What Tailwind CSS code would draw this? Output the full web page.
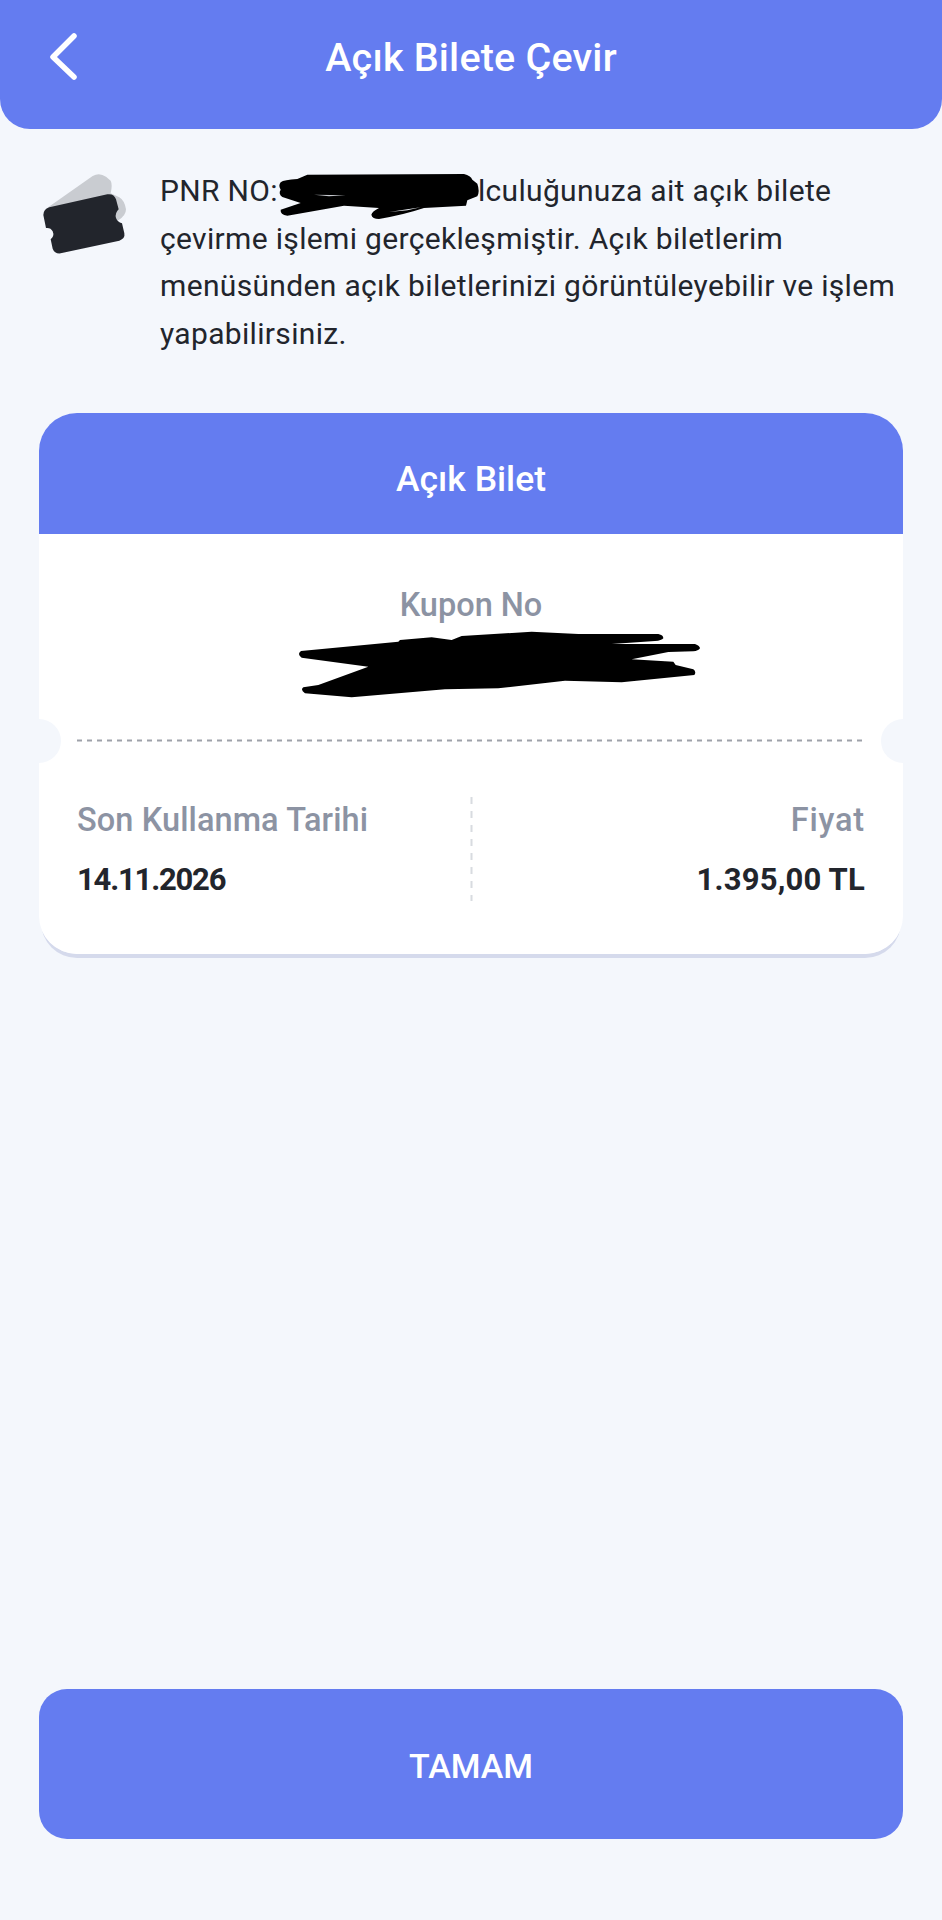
<!DOCTYPE html>
<html lang="tr">
<head>
  <meta charset="UTF-8" />
  <meta name="viewport" content="width=device-width, initial-scale=1.0"/>
  <title>Açık Bilete Çevir</title>
  <script src="https://cdn.jsdelivr.net/npm/@tailwindcss/browser@4"></script>
</head>
<body class="bg-[#f4f7fc] font-['Roboto',sans-serif] text-[#22252c]">
  <div class="flex flex-col h-[1920px] w-[942px] overflow-hidden">

    <!-- top bar -->
    <header class="relative h-[129px] shrink-0 bg-[#647cf0] rounded-b-[30px] flex items-start justify-center pt-[33px]">
      <svg class="absolute left-[46px] top-[30px]" width="34" height="52" viewBox="0 0 34 52" fill="none">
        <path d="M28 6 L7 27 L28 47" stroke="white" stroke-width="5.5" stroke-linecap="round" stroke-linejoin="round"/>
      </svg>
      <h1 class="text-[39.5px] leading-[50px] font-medium text-white tracking-[0.2px]">Açık Bilete Çevir</h1>
    </header>

    <!-- info text -->
    <div class="flex items-start pl-[20px] mt-[21px]">
      <svg class="shrink-0 mr-[10px]" width="130" height="120" viewBox="0 0 390 360">
        <path d="M76 178 L218 78 Q238 66 258 80 L272 92 Q278 104 272 130 L298 142 Q314 152 318 178 Q318 196 296 210 L80 200 Z" fill="#c9ccd1"/>
        <path d="M70 195 Q70 178 88 172 L262 133 Q282 130 288 148 L296 178 Q284 190 288 204 Q292 216 306 220 L313 250 Q316 266 298 272 L122 310 Q104 312 98 296 L92 268 Q104 258 98 244 Q92 232 78 234 Z" fill="#22252c"/>
      </svg>
      <p class="pt-[17px] text-[30px] leading-[47.5px] tracking-[0.33px] whitespace-nowrap">PNR NO:<span class="relative inline-block w-[200px] h-[20px]"><svg class="absolute left-[-14px] top-[-18px]" width="230" height="70" viewBox="0 0 690 210"><path d="M50 58 Q60 50 100 48 L130 35 L600 33 Q620 38 625 50 L640 62 Q648 85 640 100 L610 112 L606 128 L480 135 Q420 155 345 168 Q325 168 322 155 Q325 145 345 135 L240 128 L70 158 Q48 155 50 140 L110 120 L55 102 Q42 92 50 80 Q42 68 50 58 Z" fill="black"/><path d="M375 147 L470 133 L430 142 Z" fill="#f4f7fc"/><path d="M150 95 L245 97 L195 100 Z" fill="#c9ccd1"/></svg></span>lculuğunuza ait açık bilete<br>çevirme işlemi gerçekleşmiştir. Açık biletlerim<br>menüsünden açık biletlerinizi görüntüleyebilir ve işlem<br>yapabilirsiniz.</p>
    </div>

    <!-- ticket card -->
    <div class="relative mx-[39px] mt-[56px] rounded-[38px] shadow-[0_6px_0_-2px_#d5daec]">
      <div class="relative bg-white rounded-[38px] overflow-hidden h-[541px]">
        <div class="h-[121px] bg-[#647cf0] flex items-center justify-center pt-[13px] text-white text-[35.5px] font-medium">Açık Bilet</div>

        <div class="relative h-[208px] flex flex-col items-center pt-[50px]">
          <span class="text-[32.5px] leading-[42px] font-medium text-[#8c93a3]">Kupon No</span>
          <svg class="absolute left-[246px] top-[86px]" width="430" height="90" viewBox="0 0 1290 270">
            <path d="M48 93 L340 65 L345 60 L440 52 L500 60 L530 48 L740 35 L880 42 L1120 42 Q1135 45 1135 55 Q1130 62 1110 63 L980 72 L1230 72 Q1245 78 1245 85 Q1240 93 1225 94 L1150 96 L1040 118 L1165 125 L1172 135 L1225 148 Q1235 155 1228 165 L1010 187 L840 182 L640 205 L480 208 L200 232 L60 220 Q45 210 55 202 L100 195 L250 140 L50 113 Q35 103 48 93 Z" fill="black"/>
          </svg>
          <svg class="absolute left-[38px] bottom-0" width="790" height="3" viewBox="0 0 790 3">
            <line x1="0" y1="1.5" x2="790" y2="1.5" stroke="#9ea1a9" stroke-width="2" stroke-dasharray="5 5"/>
          </svg>
        </div>
        <span class="absolute left-[-22px] top-[306px] w-[44px] h-[44px] rounded-full bg-[#f4f7fc]"></span>
        <span class="absolute right-[-22px] top-[306px] w-[44px] h-[44px] rounded-full bg-[#f4f7fc]"></span>

        <div class="relative flex justify-between px-[38px] pt-[57px]">
          <div class="flex flex-col gap-[18px]">
            <span class="text-[32.5px] leading-[42px] font-medium text-[#8c93a3] tracking-[0.1px]">Son Kullanma Tarihi</span>
            <span class="text-[31px] leading-[42px] font-bold tracking-[-1.2px]">14.11.2026</span>
          </div>
          <svg class="absolute left-[431px] top-[55px]" width="3" height="104" viewBox="0 0 3 104">
            <line x1="1.5" y1="0" x2="1.5" y2="104" stroke="#d8dbe0" stroke-width="2" stroke-dasharray="7 7"/>
          </svg>
          <div class="flex flex-col gap-[18px] items-end">
            <span class="text-[32.5px] leading-[42px] font-medium text-[#8c93a3] tracking-[0.8px]">Fiyat</span>
            <span class="text-[31px] leading-[42px] font-bold tracking-[0.2px]">1.395,00 TL</span>
          </div>
        </div>
      </div>
    </div>

    <!-- bottom button -->
    <button class="mt-auto mb-[81px] mx-[39px] h-[150px] shrink-0 rounded-[28px] bg-[#647cf0] pt-[5px] text-white text-[34px] font-medium">TAMAM</button>
  </div>
</body>
</html>
